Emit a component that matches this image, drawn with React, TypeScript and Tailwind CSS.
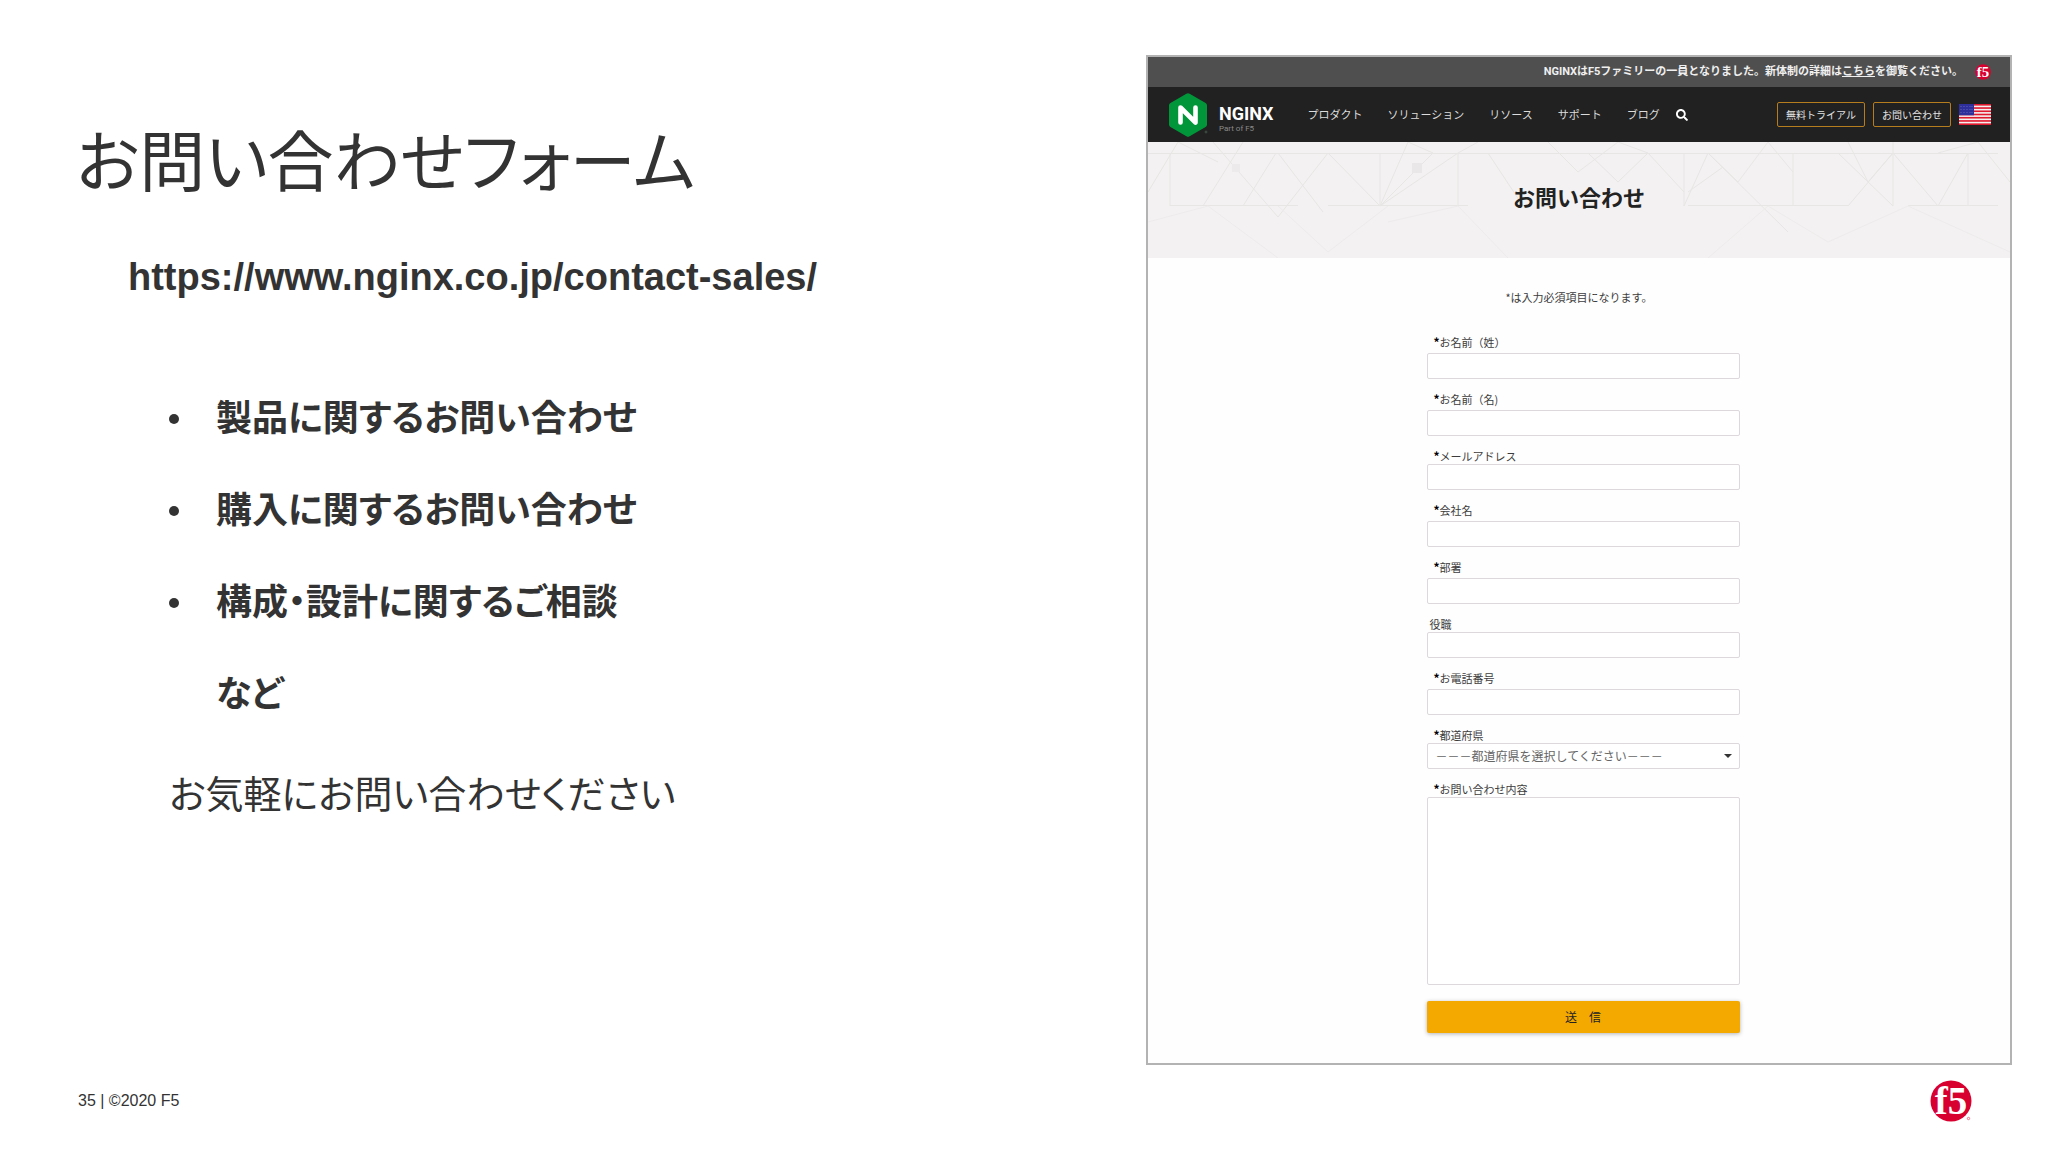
import { FaSearch } from "react-icons/fa";

interface Field {
  id: string;
  label: string;
  required: boolean;
  tight?: boolean; // label sits directly on the box
  kind?: "select" | "textarea";
}

const fields: Field[] = [
  { id: "sei", label: "お名前（姓）", required: true },
  { id: "mei", label: "お名前（名)", required: true },
  { id: "mail", label: "メールアドレス", required: true, tight: true },
  { id: "kaisha", label: "会社名", required: true },
  { id: "busho", label: "部署", required: true },
  { id: "yakushoku", label: "役職", required: false, tight: true },
  { id: "tel", label: "お電話番号", required: true },
  { id: "pref", label: "都道府県", required: true, tight: true, kind: "select" },
  { id: "naiyo", label: "お問い合わせ内容", required: true, tight: true, kind: "textarea" },
];

const topics = [
  "製品に関するお問い合わせ",
  "購入に関するお問い合わせ",
  "構成・設計に関するご相談",
];

const nav = ["プロダクト", "ソリューション", "リソース", "サポート", "ブログ"];

const box = "block w-full rounded-xs border border-[#dcd8dc] bg-white outline-none";

const outlineButton =
  "h-[25px] rounded-xs border border-[#b57d1e] px-[8px] text-[10px] leading-[23px] text-[#e4e4e4]";

function F5Logo({ className }: { className: string }) {
  return (
    <svg viewBox="0 0 42 42" className={className} role="img" aria-label="F5">
      <circle cx="21" cy="21" r="20.5" fill="#d8002f" />
      <text
        x="21"
        y="34"
        textAnchor="middle"
        fontFamily="'Liberation Serif', serif"
        fontWeight="700"
        fontSize="39"
        fill="#fff"
      >
        f5
      </text>
      <circle cx="38.500" cy="38.500" r="1.200" fill="none" stroke="#d8002f" strokeWidth="0.500" />
    </svg>
  );
}

function NginxMark() {
  return (
    <svg viewBox="0 0 40 44" className="h-11 w-10" aria-hidden="true">
      <path
        d="M18.4.8a3 3 0 0 1 3.2 0l16 9.2a3 3 0 0 1 1.4 2.6v18.8a3 3 0 0 1-1.4 2.6l-16 9.2a3 3 0 0 1-3.2 0l-16-9.2A3 3 0 0 1 1 31.400V12.600A3 3 0 0 1 2.400 10z"
        fill="#009639"
      />
      <polyline
        points="12.500,29.500 12.500,14.500 27.500,29.500 27.500,14.500"
        fill="none"
        stroke="#fff"
        strokeWidth="4.600"
        strokeLinecap="round"
        strokeLinejoin="round"
      />
      <circle cx="38" cy="39" r="1" fill="none" stroke="#5c7a66" strokeWidth="0.500" />
    </svg>
  );
}

function Flag() {
  return (
    <svg viewBox="0 0 32 21" className="h-[21px] w-8" role="img" aria-label="English">
      <rect width="32" height="21" fill="#f4f0f0" />
      {[0, 1, 2, 3, 4, 5, 6].map((i) => (
        <rect key={i} y={i * 3.23} width="32" height="1.62" fill="#e0182d" />
      ))}
      <rect width="15" height="11.3" fill="#2f2f9c" />
      {[2, 5, 8].map((y) =>
        [2, 5, 8, 11, 13].map((x) => (
          <circle key={`${x}-${y}`} cx={x} cy={y + 0.5} r="0.4" fill="#a9a9dd" />
        )),
      )}
    </svg>
  );
}

function HeroPattern() {
  return (
    <svg
      viewBox="0 0 862 116"
      preserveAspectRatio="xMidYMid slice"
      className="absolute inset-0 h-full w-full"
      fill="none"
      stroke="#e8e5e5"
      aria-hidden="true"
    >
      <path d="M0 11.500H850M22 11V64M232 11V64M310 11V64M536 11V64M645 11V64M820 11V64" />
      <path d="M22 63.500H150M180 63.500H320M540 63.500H700M760 63.500H850" />
      <path d="M65 0L130 75L180 11L232 64L310 11M55 64L95 0M130 11L175 70M95 64L128 11M0 50L30 0L70 20" />
      <path d="M232 64L260 0L285 11L232 64M310 11L330 0M340 11L375 64M400 0L430 30L470 0L500 11" />
      <path d="M440 11L470 40L500 11M536 64L560 11L590 40L620 0L645 30M500 11L536 50M575 25L540 50M560 11L640 90" />
      <path d="M700 0L720 40L745 11L790 64L820 11M745 11L700 64M745 0V64M790 11L830 0L862 40M690 11L745 64" />
      <path
        d="M0 80L60 64L130 116M130 64L180 110L240 64M240 80L310 64L360 116M560 116L620 64L680 100L760 64L862 110"
        stroke="#edebeb"
      />
      <rect x="264" y="21" width="10" height="10" fill="#e9e7e7" stroke="none" />
      <rect x="84" y="22" width="8" height="8" fill="#eceaea" stroke="none" />
    </svg>
  );
}

function FormField({ field }: { field: Field }) {
  return (
    <div>
      <label
        htmlFor={field.id}
        className={`flex h-4 text-[11px] leading-4 text-[#3c3c3c] ${field.required ? "pl-[7px]" : "pl-[3px]"} ${field.tight ? "" : "mb-[3px]"}`}
      >
        {field.required && <span className="w-[6px] text-[12px] font-bold text-black">*</span>}
        {field.label}
      </label>
      {field.kind === "select" ? (
        <div className="relative">
          <select
            id={field.id}
            className={`${box} h-[26px] appearance-none px-2 text-[12px] text-[#666]`}
          >
            <option>－－－都道府県を選択してください－－－</option>
          </select>
          <span className="pointer-events-none absolute top-[11px] right-2 border-x-4 border-t-4 border-x-transparent border-t-[#333]" />
        </div>
      ) : field.kind === "textarea" ? (
        <textarea id={field.id} className={`${box} h-[188px] resize-none`} />
      ) : (
        <input id={field.id} className={`${box} h-[26px] px-2 text-[12px]`} />
      )}
    </div>
  );
}

function ContactPage() {
  return (
    <div className="border-2 border-[#b3b3b3] bg-[#fefefe]">
      <div className="flex h-[30px] items-center justify-end gap-3 bg-[#4f4f4f] pr-[19px] text-[11px] font-bold text-[#f0f0f0]">
        <p className="font-['Roboto','Noto_Sans_CJK_JP',sans-serif]">
          NGINXはF5ファミリーの一員となりました。新体制の詳細は
          <a href="#" className="underline">こちら</a>
          を御覧ください。
        </p>
        <F5Logo className="h-4 w-4" />
      </div>

      <header className="flex h-[55px] items-center bg-[#212121] pr-[19px] pl-5">
        <a href="#" className="flex items-center gap-[11px]">
          <NginxMark />
          <span className="flex flex-col pt-2 font-[Roboto]">
            <span className="text-[18px] leading-5 font-bold text-white">NGINX</span>
            <span className="text-[8px] leading-[10px] text-[#8a8a8a]">Part of F5</span>
          </span>
        </a>
        <nav className="ml-[34px] flex items-center gap-[25px] text-[11px] text-[#dcdcdc]">
          {nav.map((n) => (
            <a key={n} href="#">{n}</a>
          ))}
        </nav>
        <button type="button" aria-label="検索" className="ml-4 text-[12px] text-white">
          <FaSearch />
        </button>
        <div className="ml-auto flex items-center gap-2">
          <button type="button" className={outlineButton}>無料トライアル</button>
          <button type="button" className={outlineButton}>お問い合わせ</button>
          <Flag />
        </div>
      </header>

      <div className="relative flex h-[116px] items-center justify-center bg-[#f3f1f1] pb-2">
        <HeroPattern />
        <h2 className="relative text-[22px] leading-8 font-bold text-[#222]">お問い合わせ</h2>
      </div>

      <p className="pt-[31px] text-center text-[11px] leading-4 text-[#3c3c3c]">
        *は入力必須項目になります。
      </p>
      <form className="flex flex-col items-center pt-[29px] pb-[30px] pl-2">
        <div className="flex w-[313px] flex-col gap-3">
          {fields.map((f) => (
            <FormField key={f.id} field={f} />
          ))}
          <button
            type="button"
            className="mt-1 h-8 w-full rounded-xs bg-[#f3a900] text-[12px] text-[#222] shadow-[0_1px_4px_rgba(0,0,0,0.3)]"
          >
            送　信
          </button>
        </div>
      </form>
    </div>
  );
}

export default function App() {
  return (
    <div className="min-h-screen bg-white font-['Liberation_Sans','Noto_Sans_CJK_JP',sans-serif] text-[#333]">
      <main className="grid grid-cols-[1146fr_866fr] pt-[55px] pr-9">
        <section className="min-w-0 pt-17 pl-[76px] [font-feature-settings:'palt']">
          <h1 className="text-[66px] leading-20">お問い合わせフォーム</h1>
          <p className="mt-[52px] pl-[52px] text-[38px] leading-11 font-bold">
            https://www.nginx.co.jp/contact-sales/
          </p>
          <div className="mt-[74px] pl-[93px]">
            <ul className="text-[36px] leading-[92px] font-bold">
              {topics.map((t) => (
                <li key={t} className="flex items-center">
                  <span className="mr-[37px] h-[10px] w-[10px] rounded-full bg-[#333]" />
                  {t}
                </li>
              ))}
              <li className="pl-[47px]">など</li>
            </ul>
            <p className="mt-6 text-[38px] leading-15">お気軽にお問い合わせください</p>
          </div>
        </section>
        <section className="min-w-0 font-['Noto_Sans_CJK_JP',sans-serif]">
          <ContactPage />
        </section>
      </main>

      <footer className="flex items-center justify-between pt-[15px] pr-[76px] pb-7 pl-[78px] text-[16px]">
        <p>35 | ©2020 F5</p>
        <F5Logo className="h-[42px] w-[42px]" />
      </footer>
    </div>
  );
}
